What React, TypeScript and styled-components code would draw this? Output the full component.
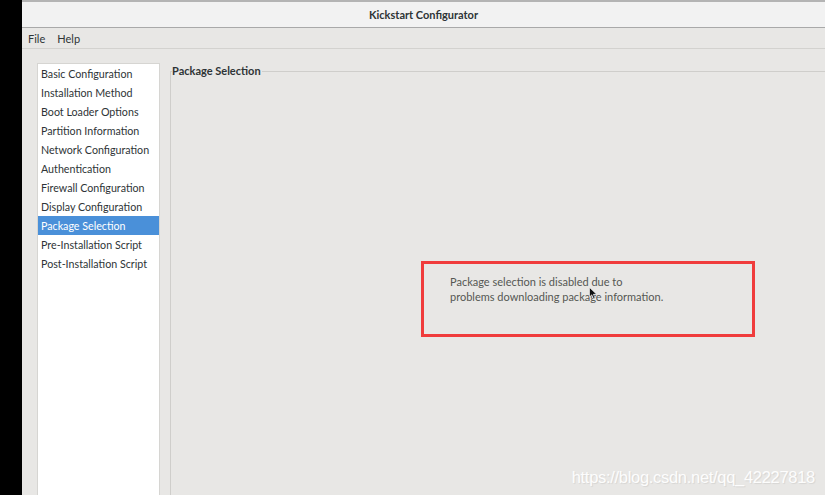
import React from "react";
import styled, { createGlobalStyle } from "styled-components";

const GlobalStyle = createGlobalStyle`
  html, body {
    margin: 0;
    padding: 0;
    height: 100%;
    background: #000;
    overflow: hidden;
  }
  #root {
    height: 100%;
  }
`;

const Screen = styled.div`
  position: relative;
  display: flex;
  width: 825px;
  height: 495px;
  font-family: Lato, "Noto Sans", sans-serif;
  font-size: 11px;
  color: #2e3436;
`;

const Gutter = styled.div`
  width: 22px;
  flex-shrink: 0;
  background: #000;
`;

const Window = styled.div`
  flex: 1;
  display: flex;
  flex-direction: column;
  background: #e8e7e5;
  min-width: 0;
`;

const TitleBar = styled.div`
  height: 25px;
  display: flex;
  align-items: center;
  justify-content: center;
  background: #f2f2f2;
  border-top: 2px solid #b4b4b4;
  border-bottom: 1px solid #a9a9a9;
  font-weight: 700;
  font-size: 11px;
  color: #2e3436;
`;

const MenuBar = styled.div`
  height: 20px;
  display: flex;
  align-items: center;
  gap: 12px;
  padding-left: 6px;
  border-bottom: 1px solid #d3d2cf;
`;

const MenuItem = styled.span`
  color: #2e3436;
`;

const Body = styled.div`
  flex: 1;
  display: flex;
  gap: 10px;
  padding: 14px 0 0 15px;
  min-height: 0;
`;

const Sidebar = styled.ul`
  list-style: none;
  margin: 0;
  padding: 0;
  width: 121px;
  flex-shrink: 0;
  background: #fff;
  border: 1px solid #d6d5d2;
  border-bottom: none;
  font-size: 10.7px;
`;

const SidebarItem = styled.li<{ $active?: boolean }>`
  height: 19px;
  line-height: 19px;
  padding-left: 3px;
  white-space: nowrap;
  background: ${(p) => (p.$active ? "#4a90d9" : "transparent")};
  color: ${(p) => (p.$active ? "#fff" : "#2e3436")};
`;

const Frame = styled.fieldset`
  flex: 1;
  margin: 1px 0 0;
  padding: 0;
  border: 1px solid #cfcecb;
  border-right: none;
  border-bottom: none;
  min-width: 0;
`;

const FrameTitle = styled.legend`
  padding: 0 1px 0 0;
  margin-left: 1px;
  font-weight: 700;
  line-height: 14px;
  color: #2e3436;
`;

const Notice = styled.div`
  margin: 183px 0 0 250px;
  width: 302px;
  height: 60px;
  border: 3px solid #f03c3c;
  padding: 10px 0 0 26px;
  box-sizing: content-box;
`;

const NoticeText = styled.p`
  margin: 0;
  white-space: nowrap;
  line-height: 15px;
  color: #555753;
`;

const Watermark = styled.div`
  position: absolute;
  right: 10px;
  bottom: 8px;
  font-family: "Liberation Sans", Arial, sans-serif;
  font-size: 16.5px;
  color: rgba(255, 255, 255, 0.95);
  text-shadow: 1px 1px 1px rgba(0, 0, 0, 0.08);
  letter-spacing: -0.3px;
`;

const Pointer = styled.svg`
  position: absolute;
  left: 589px;
  top: 287px;
`;

const sections = [
  "Basic Configuration",
  "Installation Method",
  "Boot Loader Options",
  "Partition Information",
  "Network Configuration",
  "Authentication",
  "Firewall Configuration",
  "Display Configuration",
  "Package Selection",
  "Pre-Installation Script",
  "Post-Installation Script",
];

const App: React.FC = () => {
  return (
    <>
      <GlobalStyle />
      <Screen>
        <Gutter />
        <Window>
          <TitleBar>Kickstart Configurator</TitleBar>
          <MenuBar>
            <MenuItem>File</MenuItem>
            <MenuItem>Help</MenuItem>
          </MenuBar>
          <Body>
            <Sidebar>
              {sections.map((s) => (
                <SidebarItem key={s} $active={s === "Package Selection"}>
                  {s}
                </SidebarItem>
              ))}
            </Sidebar>
            <Frame>
              <FrameTitle>Package Selection</FrameTitle>
              <Notice>
                <NoticeText>
                  Package selection is disabled due to
                  <br />
                  problems downloading package information.
                </NoticeText>
              </Notice>
            </Frame>
          </Body>
        </Window>
        <Pointer width="9" height="13" viewBox="0 0 9 13">
          <path
            d="M0.5 0.5 L0.5 10 L2.8 7.8 L4.5 11.8 L6 11.2 L4.4 7.3 L7.6 7.3 Z"
            fill="#111"
            stroke="#fff"
            strokeWidth="0.6"
          />
        </Pointer>
        <Watermark>https://blog.csdn.net/qq_42227818</Watermark>
      </Screen>
    </>
  );
};

export default App;
